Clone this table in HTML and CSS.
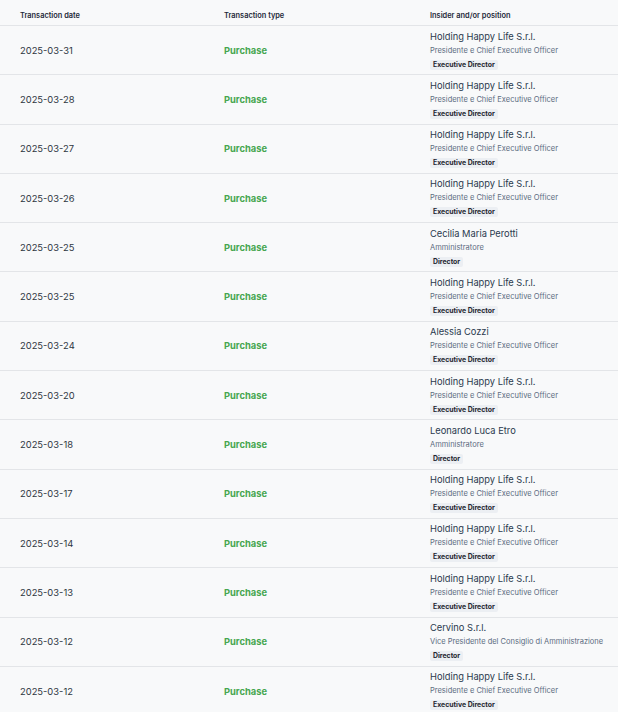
FILE: index.html
```html
<!DOCTYPE html>
<html lang="en">
<head>
<meta charset="utf-8">
<title>Insider transactions</title>
<link rel="stylesheet" href="styles.css">
</head>
<body>
<div class="table">
  <div class="row head">
    <div class="th">Transaction date</div>
    <div class="th">Transaction type</div>
    <div class="th">Insider and/or position</div>
  </div>

  <div class="row">
    <div class="date">2025-03-31</div>
    <div class="type">Purchase</div>
    <div class="ins"><div class="name">Holding Happy Life S.r.l.</div><div class="pos">Presidente e Chief Executive Officer</div><span class="badge">Executive Director</span></div>
  </div>
  <div class="row">
    <div class="date">2025-03-28</div>
    <div class="type">Purchase</div>
    <div class="ins"><div class="name">Holding Happy Life S.r.l.</div><div class="pos">Presidente e Chief Executive Officer</div><span class="badge">Executive Director</span></div>
  </div>
  <div class="row">
    <div class="date">2025-03-27</div>
    <div class="type">Purchase</div>
    <div class="ins"><div class="name">Holding Happy Life S.r.l.</div><div class="pos">Presidente e Chief Executive Officer</div><span class="badge">Executive Director</span></div>
  </div>
  <div class="row">
    <div class="date">2025-03-26</div>
    <div class="type">Purchase</div>
    <div class="ins"><div class="name">Holding Happy Life S.r.l.</div><div class="pos">Presidente e Chief Executive Officer</div><span class="badge">Executive Director</span></div>
  </div>
  <div class="row">
    <div class="date">2025-03-25</div>
    <div class="type">Purchase</div>
    <div class="ins"><div class="name">Cecilia Maria Perotti</div><div class="pos">Amministratore</div><span class="badge">Director</span></div>
  </div>
  <div class="row">
    <div class="date">2025-03-25</div>
    <div class="type">Purchase</div>
    <div class="ins"><div class="name">Holding Happy Life S.r.l.</div><div class="pos">Presidente e Chief Executive Officer</div><span class="badge">Executive Director</span></div>
  </div>
  <div class="row">
    <div class="date">2025-03-24</div>
    <div class="type">Purchase</div>
    <div class="ins"><div class="name">Alessia Cozzi</div><div class="pos">Presidente e Chief Executive Officer</div><span class="badge">Executive Director</span></div>
  </div>
  <div class="row">
    <div class="date">2025-03-20</div>
    <div class="type">Purchase</div>
    <div class="ins"><div class="name">Holding Happy Life S.r.l.</div><div class="pos">Presidente e Chief Executive Officer</div><span class="badge">Executive Director</span></div>
  </div>
  <div class="row">
    <div class="date">2025-03-18</div>
    <div class="type">Purchase</div>
    <div class="ins"><div class="name">Leonardo Luca Etro</div><div class="pos">Amministratore</div><span class="badge">Director</span></div>
  </div>
  <div class="row">
    <div class="date">2025-03-17</div>
    <div class="type">Purchase</div>
    <div class="ins"><div class="name">Holding Happy Life S.r.l.</div><div class="pos">Presidente e Chief Executive Officer</div><span class="badge">Executive Director</span></div>
  </div>
  <div class="row">
    <div class="date">2025-03-14</div>
    <div class="type">Purchase</div>
    <div class="ins"><div class="name">Holding Happy Life S.r.l.</div><div class="pos">Presidente e Chief Executive Officer</div><span class="badge">Executive Director</span></div>
  </div>
  <div class="row">
    <div class="date">2025-03-13</div>
    <div class="type">Purchase</div>
    <div class="ins"><div class="name">Holding Happy Life S.r.l.</div><div class="pos">Presidente e Chief Executive Officer</div><span class="badge">Executive Director</span></div>
  </div>
  <div class="row">
    <div class="date">2025-03-12</div>
    <div class="type">Purchase</div>
    <div class="ins"><div class="name">Cervino S.r.l.</div><div class="pos">Vice Presidente del Consiglio di Amministrazione</div><span class="badge">Director</span></div>
  </div>
  <div class="row">
    <div class="date">2025-03-12</div>
    <div class="type">Purchase</div>
    <div class="ins"><div class="name">Holding Happy Life S.r.l.</div><div class="pos">Presidente e Chief Executive Officer</div><span class="badge">Executive Director</span></div>
  </div>
</div>
</body>
</html>
```

FILE: styles.css
```css
html, body {
  margin: 0;
  padding: 0;
  background: #f8f9fa;
}
body {
  font-family: Inter, "Noto Sans", "Liberation Sans", sans-serif;
  color: #2a3441;
}
.table {
  width: 618px;
}
.row {
  display: grid;
  grid-template-columns: 204px 206px 1fr;
  padding-left: 20px;
  border-bottom: 1px solid #e3e5e8;
  align-items: center;
  line-height: 13px;
}
.head {
  box-sizing: border-box;
  height: 26px;
  align-items: start;
}
.th {
  font-size: 7.4px;
  font-weight: 600;
  line-height: 11px;
  padding-top: 10px;
  color: #1f2a3a;
}
.date {
  font-size: 9.4px;
  color: #2e3641;
}
.type {
  font-size: 9.35px;
  font-weight: 700;
  color: #46a64f;
}
.ins {
  display: flex;
  flex-direction: column;
  align-items: flex-start;
  padding: 3.5px 0 4.8px;
}
.name {
  font-size: 9.3px;
  line-height: 13px;
  color: #2b3a4e;
}
.pos {
  margin-top: 1px;
  font-size: 7.5px;
  line-height: 13px;
  color: #5b6b80;
}
.badge {
  display: block;
  margin-top: 3px;
  padding: 0 3px;
  font-size: 6.9px;
  line-height: 10px;
  font-weight: 700;
  color: #1f2630;
  background: #eceff3;
  border-radius: 2px;
}
```
